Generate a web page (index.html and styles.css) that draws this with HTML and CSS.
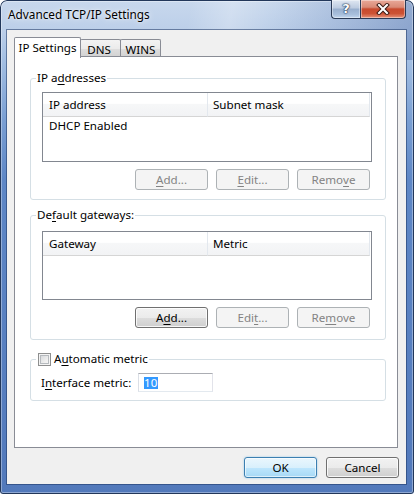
FILE: index.html
```html
<!DOCTYPE html>
<html>
<head>
<meta charset="utf-8">
<link rel="stylesheet" href="styles.css">
</head>
<body>
<div class="window">
  <div class="titlebar">
    <span class="title">Advanced TCP/IP Settings</span>
    <div class="caption">
      <div class="cbtn help"><span>?</span></div>
      <div class="cbtn close">
        <svg width="14" height="12" viewBox="0 0 14 12">
          <path d="M3 2 L11 10 M11 2 L3 10" stroke="#3b1a14" stroke-width="4" stroke-linecap="square" fill="none"/>
          <path d="M3 2 L11 10 M11 2 L3 10" stroke="#ffffff" stroke-width="2" stroke-linecap="square" fill="none"/>
        </svg>
      </div>
    </div>
  </div>
  <div class="client">
    <div class="tabs">
      <div class="tab active">IP Settings</div>
      <div class="tab t-dns">DNS</div>
      <div class="tab t-wins">WINS</div>
    </div>
    <div class="panel">
      <fieldset class="group g1">
        <legend>IP a<u>d</u>dresses</legend>
        <div class="listview lv1">
          <div class="lv-head">
            <div class="col c1">IP address</div>
            <div class="col c2">Subnet mask</div>
          </div>
          <div class="lv-row">DHCP Enabled</div>
        </div>
        <div class="btnrow">
          <div class="btn disabled"><u>A</u>dd...</div>
          <div class="btn disabled"><u>E</u>dit...</div>
          <div class="btn disabled">Remo<u>v</u>e</div>
        </div>
      </fieldset>
      <fieldset class="group g2">
        <legend>De<u>f</u>ault gateways:</legend>
        <div class="listview lv2">
          <div class="lv-head">
            <div class="col c1">Gateway</div>
            <div class="col c2">Metric</div>
          </div>
        </div>
        <div class="btnrow">
          <div class="btn">A<u>d</u>d...</div>
          <div class="btn disabled">Edi<u>t</u>...</div>
          <div class="btn disabled">Re<u>m</u>ove</div>
        </div>
      </fieldset>
      <fieldset class="group g3">
        <legend><span class="checkbox"></span>A<u>u</u>tomatic metric</legend>
        <div class="metric-row">
          <span class="metric-label">I<u>n</u>terface metric:</span>
          <div class="input"><span class="sel">10</span></div>
        </div>
      </fieldset>
    </div>
    <div class="dlg-btns">
      <div class="btn default">OK</div>
      <div class="btn">Cancel</div>
    </div>
  </div>
</div>
</body>
</html>
```

FILE: styles.css
```css
* { box-sizing: border-box; }
html, body { margin: 0; padding: 0; }
body {
  width: 414px;
  height: 494px;
  overflow: hidden;
  background: #ffffff;
  font-family: "Noto Sans", "Open Sans", sans-serif;
  font-size: 11.6px;
  color: #000;
}
u { text-decoration: underline; text-underline-offset: 2px; }

.window {
  width: 414px;
  height: 494px;
  display: flex;
  flex-direction: column;
  border-radius: 7px 7px 3px 3px;
  background:
    linear-gradient(100deg, rgba(255,255,255,0) 0%, rgba(255,255,255,0) 45%, rgba(255,255,255,0.25) 55%, rgba(255,255,255,0) 65%, rgba(60,95,160,0.4) 100%) 0 0 / 100% 60px no-repeat,
    linear-gradient(180deg, #c8d8ed 0px, #bccfe9 30px, #a3bfe3 60px, #7a9fd3 120px, #5e87c6 180px, #5279bb 100%);
  box-shadow: inset 0 0 0 1px #22375a, inset 0 0 0 2px rgba(255,255,255,0.35);
}

.titlebar {
  height: 30px;
  flex: none;
  display: flex;
  align-items: flex-start;
  padding-left: 8px;
}
.title {
  margin-top: 6px;
  line-height: 16px;
  font-size: 11.8px;
  text-shadow: 0 0 6px rgba(255,255,255,0.9), 0 0 2px rgba(255,255,255,0.8);
}
.caption {
  margin-left: auto;
  margin-right: 8px;
  display: flex;
}
.cbtn {
  height: 19px;
  border: 1px solid #2a3b57;
  border-top: none;
  display: flex;
  align-items: center;
  justify-content: center;
  box-shadow: inset 0 0 0 1px rgba(255,255,255,0.4);
}
.help {
  width: 29px;
  border-radius: 0 0 0 4px;
  border-right: none;
  background: linear-gradient(180deg, #dfe7f2 0%, #bccbe0 45%, #98afce 50%, #a8bfdc 80%, #c3d6ee 100%);
}
.help span {
  color: #fff;
  font-family: "DejaVu Sans", sans-serif;
  font-weight: bold;
  font-size: 13px;
  line-height: 14px;
  text-shadow: 0 0 1px #1d2f4d, 0 0 1px #1d2f4d, 0 0 2px #1d2f4d;
}
.close {
  width: 46px;
  border-radius: 0 0 4px 0;
  background: linear-gradient(180deg, #e9a898 0%, #d98a76 40%, #c84a2e 50%, #cc5234 75%, #e5927a 100%);
}

.client {
  flex: 1;
  margin: 0 8px 10px 7px;
  background: #f0f0f0;
  padding: 7px 7px 0 7px;
  display: flex;
  flex-direction: column;
  box-shadow: 0 0 0 1px rgba(30,55,100,0.55);
}

.tabs {
  display: flex;
  align-items: flex-end;
  height: 20px;
  flex: none;
}
.tab {
  height: 18px;
  border: 1px solid #898c95;
  border-bottom: none;
  border-radius: 2px 2px 0 0;
  background: linear-gradient(180deg, #f3f3f3 0%, #ebebeb 50%, #dedede 51%, #d2d2d2 100%);
  line-height: 16px;
  padding-top: 2px;
  text-align: center;
}
.tab.active {
  height: 21px;
  width: 67px;
  background: #ffffff;
  position: relative;
  z-index: 1;
  margin-bottom: -1px;
  padding-top: 2px;
}
.t-dns { width: 41px; margin-left: -1px; border-left: none; padding-right: 2px; }
.t-wins { width: 41px; margin-left: -1px; }

.panel {
  width: 384px;
  height: 392px;
  margin-top: -1px;
  background: #ffffff;
  border: 1px solid #898c95;
  padding: 13px 11px 0 15px;
  display: flex;
  flex-direction: column;
  flex: none;
}

.group {
  margin: 0;
  min-width: 0;
  border: 1px solid #d5dfe5;
  border-radius: 3px;
  padding: 6px 13px 9px 11px;
}
.group legend {
  padding: 0 1px;
  margin-left: -6px;
  line-height: 16px;
  height: 16px;
  display: flex;
  align-items: center;
}
.g2 { margin-top: 7px; padding-top: 8px; padding-bottom: 11px; }
.g3 { margin-top: 11px; padding-top: 6px; padding-bottom: 8px; }

.listview {
  border: 1px solid #828790;
  background: #ffffff;
}
.lv1 { height: 70px; }
.lv2 { height: 69px; }
.lv-head {
  display: flex;
  height: 24px;
}
.col {
  height: 24px;
  line-height: 23px;
  padding-left: 6px;
  background: linear-gradient(180deg, #ffffff 0%, #ffffff 45%, #f6f7f8 50%, #f2f3f5 100%);
  border-right: 1px solid #e3e8ee;
  border-bottom: 1px solid #d5d5d5;
}
.c1 { width: 165px; }
.c2 { width: 162px; padding-left: 5px; }
.lv-row {
  height: 17px;
  line-height: 17px;
  padding-left: 6px;
}

.btnrow {
  display: flex;
  justify-content: flex-end;
  gap: 8px;
  margin-top: 7px;
  margin-right: 2px;
}
.btn {
  width: 73px;
  height: 21px;
  border: 1px solid #707070;
  border-radius: 3px;
  background: linear-gradient(180deg, #f2f2f2 0%, #ebebeb 50%, #dddddd 51%, #cfcfcf 100%);
  box-shadow: inset 0 0 0 1px rgba(255,255,255,0.8);
  display: flex;
  align-items: center;
  justify-content: center;
  line-height: 16px;
}
.btn.disabled {
  border-color: #adb2b5;
  background: #f4f4f4;
  box-shadow: none;
  color: #838383;
}
.btn.default {
  border-color: #3c7fb1;
  background: linear-gradient(180deg, #eaf6fd 0%, #d9f0fc 50%, #bee6fd 51%, #a7d9f5 100%);
  box-shadow: inset 0 0 0 1px rgba(255,255,255,0.6), 0 0 2px rgba(80,170,230,0.6);
}

.checkbox {
  width: 13px;
  height: 13px;
  margin-left: 1px;
  margin-right: 3px;
  border: 1px solid #8e8f8f;
  background: linear-gradient(135deg, #cfd2d6 0%, #eeeeee 60%, #fafafa 100%);
  box-shadow: inset 0 0 0 1px #f4f4f4, inset 0 0 0 2px #b6babe;
}

.metric-row {
  display: flex;
  align-items: center;
  height: 19px;
}
.metric-label {
  width: 97px;
  margin-left: -1px;
}
.input {
  width: 75px;
  height: 19px;
  border: 1px solid;
  border-color: #abadb3 #e2e3ea #e3e9ef #dbdfe6;
  background: #ffffff;
  padding-left: 5px;
  display: flex;
  align-items: center;
}
.sel {
  background: #3399ff;
  color: #ffffff;
  line-height: 12px;
  padding: 0 1px 0 0;
}

.dlg-btns {
  display: flex;
  justify-content: flex-end;
  gap: 9px;
  margin-top: 9px;
  margin-right: 0;
}
```
